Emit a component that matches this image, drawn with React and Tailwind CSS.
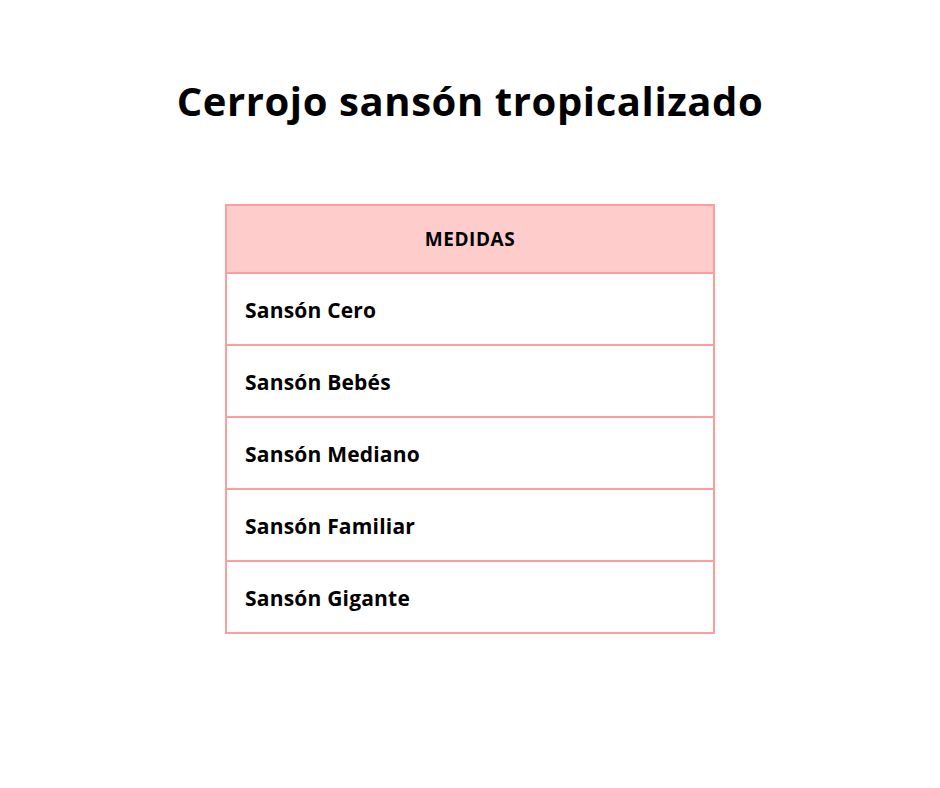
const rows = ['Sansón Cero', 'Sansón Bebés', 'Sansón Mediano', 'Sansón Familiar', 'Sansón Gigante'];

export default function App() {
    return (
        <div className="w-[940px] h-[788px] bg-white flex flex-col items-center font-['Open_Sans',sans-serif] text-black">
            <h1 className="mt-[75px] text-[40px] leading-[52px] font-bold tracking-[0.6px]">Cerrojo sansón tropicalizado</h1>

            <div className="mt-[77px] w-[490px] border-2 border-[#ff9c9c]">
                <div className="h-[68px] bg-[#ffcccc] border-b-2 border-[#ff9c9c] flex items-center justify-center text-[19px] font-bold tracking-[0.6px]">
                    MEDIDAS
                </div>
                {rows.map((r, i) => (
                    <div
                        key={r}
                        className={i < rows.length - 1 ? 'h-[72px] border-b-2 border-[#ff9c9c] flex items-center pl-[18px] pt-[3px] text-[21px] font-bold tracking-[0.2px]' : 'h-[70px] flex items-center pl-[18px] pt-[3px] text-[21px] font-bold tracking-[0.2px]'}
                    >
                        {r}
                    </div>
                ))}
            </div>
        </div>
    );
}
